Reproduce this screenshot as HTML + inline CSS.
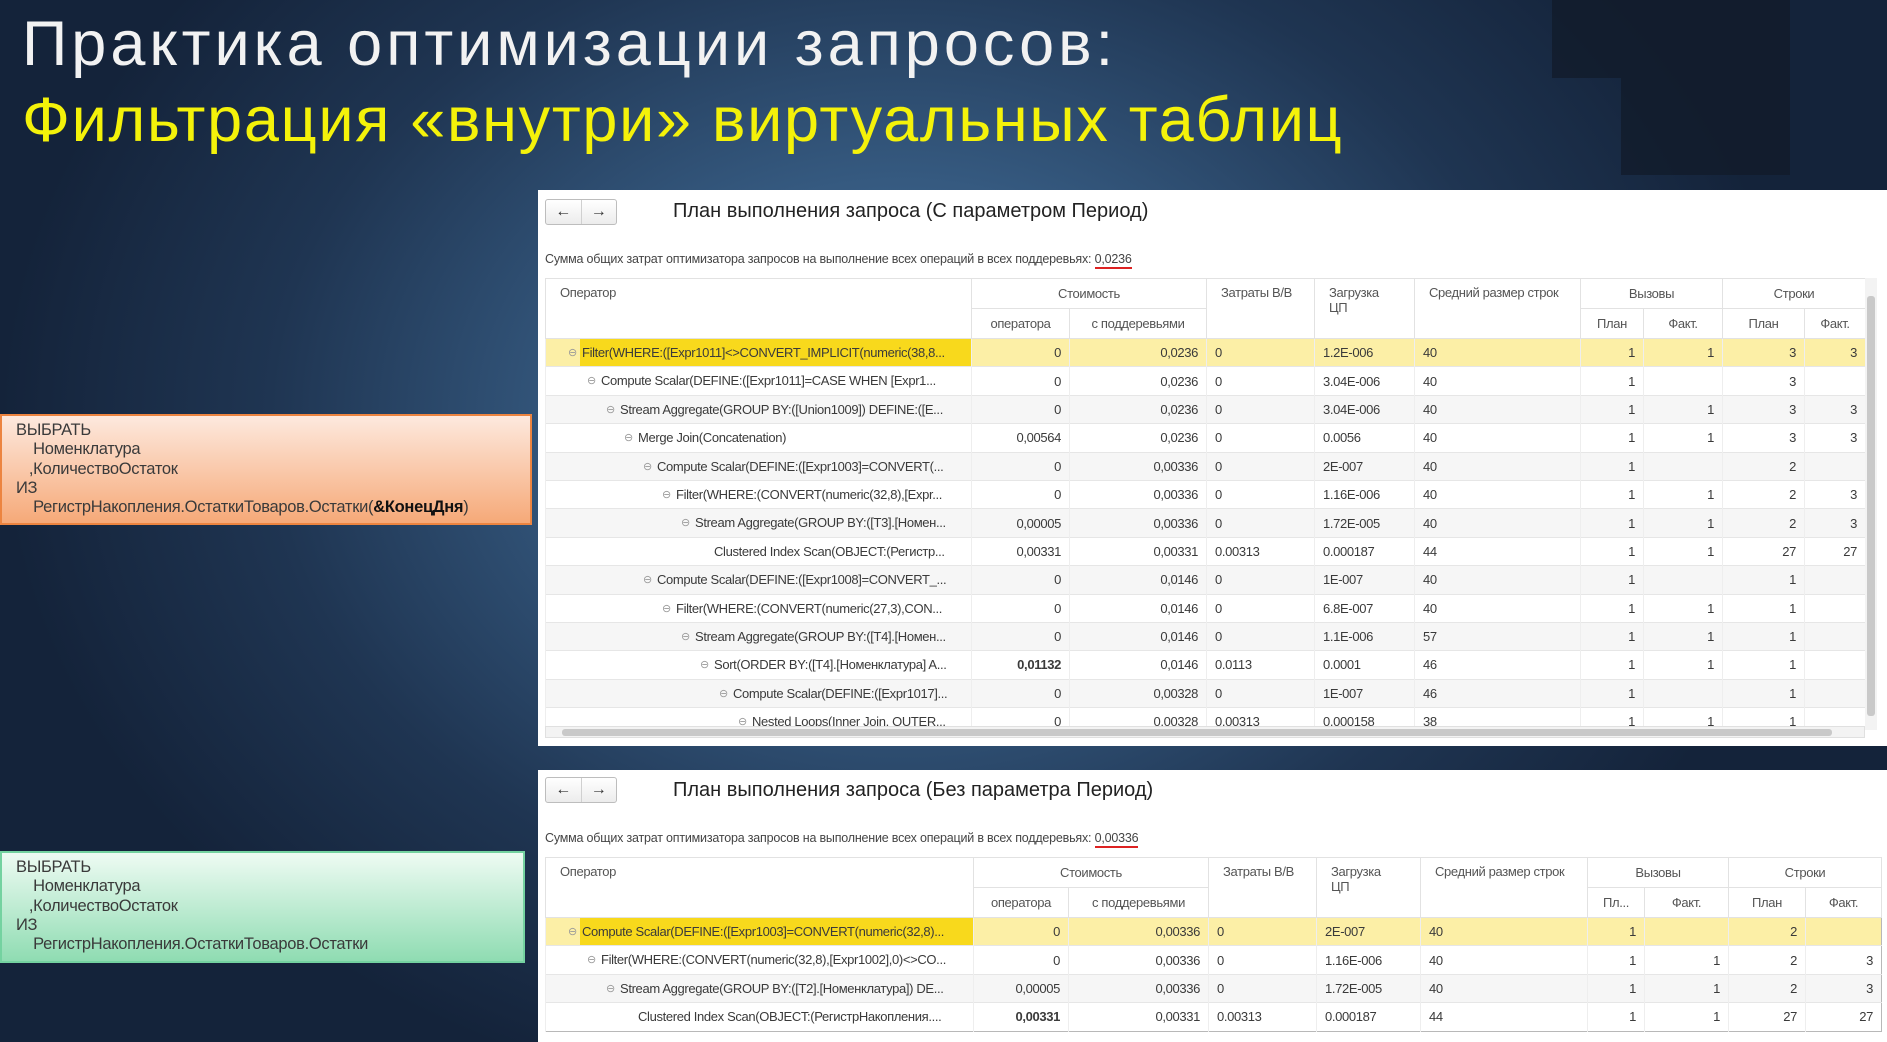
<!DOCTYPE html>
<html><head><meta charset="utf-8">
<style>
*{margin:0;padding:0;box-sizing:border-box}
body{width:1887px;height:1042px;overflow:hidden;position:relative;font-family:"Liberation Sans",sans-serif;
background:radial-gradient(ellipse 900px 700px at 900px 420px,#4f79a3 0%,#35597f 35%,#1f3552 70%,#14233a 100%);}
.dk{position:absolute;background:#111b29;opacity:.75}
.t{position:absolute;left:22px;font-size:63px;line-height:64px;white-space:nowrap}
.panel{position:absolute;left:538px;right:0;background:#fff}
.btns{position:absolute;left:7px;width:72px;height:26px;border:1px solid #bdbdbd;border-radius:3px;background:linear-gradient(#fff,#ececec);font-size:16px;color:#333;display:flex}
.btns span{flex:1;text-align:center;line-height:23px;font-weight:bold}
.btns span+span{border-left:1px solid #d0d0d0}
.ttl{position:absolute;left:135px;font-size:20px;color:#222;white-space:nowrap}
.sum{position:absolute;left:7px;font-size:12.5px;color:#444;white-space:nowrap;letter-spacing:-.2px}
.sum u{text-decoration:none;border-bottom:2px solid #d22;padding-bottom:1px}
table{position:absolute;left:7px;border-collapse:collapse;table-layout:fixed;font-size:13px;color:#3a3a3a;letter-spacing:-.35px;border:1px solid #b8b8b8}
td,th{white-space:nowrap;overflow:hidden;padding:0 8px;font-weight:normal}
th{height:30px;color:#555;border:1px solid #e2e2e2;text-align:center;vertical-align:middle}
th.l{text-align:left;vertical-align:top;padding-top:6px;padding-left:14px}
td{height:28.4px;border-left:1px solid #eee;text-align:right;border-top:1px solid #e6e6e6}
td.l{text-align:left}
tr.a td{background:#f6f6f6}
tr.h td{background:#fcefa6}
td.op{padding:0;position:relative;text-align:left}
td.op i{position:absolute;top:7px;font-style:normal;color:#999;font-size:11px}
td.op span{position:absolute;top:0;bottom:0;right:0;line-height:28px;padding-left:2px;overflow:hidden;text-overflow:ellipsis}
tr.h td.op span{background:#f8d91c}
b{font-weight:bold}
.box{position:absolute;left:0;font-size:16.5px;line-height:19.3px;color:#3a3a3a;padding:5px 14px;white-space:pre;letter-spacing:-.3px}
</style></head><body>
<div class="dk" style="left:1552px;top:0;width:238px;height:78px"></div>
<div class="dk" style="left:1621px;top:78px;width:169px;height:97px"></div>
<div class="t" style="top:12px;color:#f2f2f2;letter-spacing:4px">Практика оптимизации запросов:</div>
<div class="t" style="top:88px;color:#f4f20a;letter-spacing:1.7px">Фильтрация «внутри» виртуальных таблиц</div>

<div class="box" style="top:414px;width:532px;height:111px;background:linear-gradient(#fde9de,#f6a978);border:2px solid #ec8440">ВЫБРАТЬ
    Номенклатура
   ,КоличествоОстаток
ИЗ
    РегистрНакопления.ОстаткиТоваров.Остатки(<b style="color:#111">&amp;КонецДня</b>)</div>
<div class="box" style="top:851px;width:525px;height:112px;background:linear-gradient(#eefbf3,#8fdcb2);border:2px solid #74d2a0">ВЫБРАТЬ
    Номенклатура
   ,КоличествоОстаток
ИЗ
    РегистрНакопления.ОстаткиТоваров.Остатки</div>

<div class="panel" style="top:190px;height:556px">
<div class="btns" style="top:9px"><span>←</span><span>→</span></div>
<div class="ttl" style="top:10px">План выполнения запроса (С параметром Период)</div>
<div class="sum" style="top:62px">Сумма общих затрат оптимизатора запросов на выполнение всех операций в всех поддеревьях: <u>0,0236</u></div>
<div style="position:absolute;left:1327px;top:88px;width:12px;height:452px;background:#f3f3f3"><div style="margin:18px 2px 0;height:420px;background:#c9c9c9;border-radius:3px"></div></div>
<div style="position:absolute;left:7px;top:536px;width:1320px;height:12px;background:#f3f3f3;border:1px solid #e0e0e0"><div style="margin:2px 0 0 16px;width:1270px;height:7px;background:#c9c9c9;border-radius:3px"></div></div>
<div style="position:absolute;left:7px;top:88px;width:1320px;height:448px;overflow:hidden">
<table style="left:0;top:0;width:1320px">
<colgroup><col style="width:426px"><col style="width:98px"><col style="width:137px"><col style="width:108px"><col style="width:100px"><col style="width:166px"><col style="width:63px"><col style="width:79px"><col style="width:82px"><col style="width:61px"></colgroup>
<tr><th class="l" rowspan="2">Оператор</th><th colspan="2">Стоимость</th><th class="l" rowspan="2">Затраты В/В</th><th class="l" rowspan="2">Загрузка<br>ЦП</th><th class="l" rowspan="2">Средний размер строк</th><th colspan="2">Вызовы</th><th colspan="2">Строки</th></tr>
<tr><th>оператора</th><th>с поддеревьями</th><th>План</th><th>Факт.</th><th>План</th><th>Факт.</th></tr>
<tr class="h"><td class="op"><i style="left:22px">⊖</i><span style="left:34px">Filter(WHERE:([Expr1011]&lt;&gt;CONVERT_IMPLICIT(numeric(38,8...</span></td><td>0</td><td>0,0236</td><td class="l">0</td><td class="l">1.2E-006</td><td class="l">40</td><td>1</td><td>1</td><td>3</td><td>3</td></tr>
<tr><td class="op"><i style="left:41px">⊖</i><span style="left:53px">Compute Scalar(DEFINE:([Expr1011]=CASE WHEN [Expr1...</span></td><td>0</td><td>0,0236</td><td class="l">0</td><td class="l">3.04E-006</td><td class="l">40</td><td>1</td><td></td><td>3</td><td></td></tr>
<tr class="a"><td class="op"><i style="left:60px">⊖</i><span style="left:72px">Stream Aggregate(GROUP BY:([Union1009]) DEFINE:([E...</span></td><td>0</td><td>0,0236</td><td class="l">0</td><td class="l">3.04E-006</td><td class="l">40</td><td>1</td><td>1</td><td>3</td><td>3</td></tr>
<tr><td class="op"><i style="left:78px">⊖</i><span style="left:90px">Merge Join(Concatenation)</span></td><td>0,00564</td><td>0,0236</td><td class="l">0</td><td class="l">0.0056</td><td class="l">40</td><td>1</td><td>1</td><td>3</td><td>3</td></tr>
<tr class="a"><td class="op"><i style="left:97px">⊖</i><span style="left:109px">Compute Scalar(DEFINE:([Expr1003]=CONVERT(...</span></td><td>0</td><td>0,00336</td><td class="l">0</td><td class="l">2E-007</td><td class="l">40</td><td>1</td><td></td><td>2</td><td></td></tr>
<tr><td class="op"><i style="left:116px">⊖</i><span style="left:128px">Filter(WHERE:(CONVERT(numeric(32,8),[Expr...</span></td><td>0</td><td>0,00336</td><td class="l">0</td><td class="l">1.16E-006</td><td class="l">40</td><td>1</td><td>1</td><td>2</td><td>3</td></tr>
<tr class="a"><td class="op"><i style="left:135px">⊖</i><span style="left:147px">Stream Aggregate(GROUP BY:([T3].[Номен...</span></td><td>0,00005</td><td>0,00336</td><td class="l">0</td><td class="l">1.72E-005</td><td class="l">40</td><td>1</td><td>1</td><td>2</td><td>3</td></tr>
<tr><td class="op"><span style="left:166px">Clustered Index Scan(OBJECT:(Регистр...</span></td><td>0,00331</td><td>0,00331</td><td class="l">0.00313</td><td class="l">0.000187</td><td class="l">44</td><td>1</td><td>1</td><td>27</td><td>27</td></tr>
<tr class="a"><td class="op"><i style="left:97px">⊖</i><span style="left:109px">Compute Scalar(DEFINE:([Expr1008]=CONVERT_...</span></td><td>0</td><td>0,0146</td><td class="l">0</td><td class="l">1E-007</td><td class="l">40</td><td>1</td><td></td><td>1</td><td></td></tr>
<tr><td class="op"><i style="left:116px">⊖</i><span style="left:128px">Filter(WHERE:(CONVERT(numeric(27,3),CON...</span></td><td>0</td><td>0,0146</td><td class="l">0</td><td class="l">6.8E-007</td><td class="l">40</td><td>1</td><td>1</td><td>1</td><td></td></tr>
<tr class="a"><td class="op"><i style="left:135px">⊖</i><span style="left:147px">Stream Aggregate(GROUP BY:([T4].[Номен...</span></td><td>0</td><td>0,0146</td><td class="l">0</td><td class="l">1.1E-006</td><td class="l">57</td><td>1</td><td>1</td><td>1</td><td></td></tr>
<tr><td class="op"><i style="left:154px">⊖</i><span style="left:166px">Sort(ORDER BY:([T4].[Номенклатура] A...</span></td><td><b>0,01132</b></td><td>0,0146</td><td class="l">0.0113</td><td class="l">0.0001</td><td class="l">46</td><td>1</td><td>1</td><td>1</td><td></td></tr>
<tr class="a"><td class="op"><i style="left:173px">⊖</i><span style="left:185px">Compute Scalar(DEFINE:([Expr1017]...</span></td><td>0</td><td>0,00328</td><td class="l">0</td><td class="l">1E-007</td><td class="l">46</td><td>1</td><td></td><td>1</td><td></td></tr>
<tr><td class="op"><i style="left:192px">⊖</i><span style="left:204px">Nested Loops(Inner Join, OUTER...</span></td><td>0</td><td>0,00328</td><td class="l">0.00313</td><td class="l">0.000158</td><td class="l">38</td><td>1</td><td>1</td><td>1</td><td></td></tr>
</table></div>
</div>

<div class="panel" style="top:770px;height:272px">
<div class="btns" style="top:7px"><span>←</span><span>→</span></div>
<div class="ttl" style="top:9px">План выполнения запроса (Без параметра Период)</div>
<div class="sum" style="top:61px">Сумма общих затрат оптимизатора запросов на выполнение всех операций в всех поддеревьях: <u>0,00336</u></div>
<table style="top:87px;width:1336px">
<colgroup><col style="width:428px"><col style="width:95px"><col style="width:140px"><col style="width:108px"><col style="width:104px"><col style="width:167px"><col style="width:57px"><col style="width:84px"><col style="width:77px"><col style="width:76px"></colgroup>
<tr><th class="l" rowspan="2">Оператор</th><th colspan="2">Стоимость</th><th class="l" rowspan="2">Затраты В/В</th><th class="l" rowspan="2">Загрузка<br>ЦП</th><th class="l" rowspan="2">Средний размер строк</th><th colspan="2">Вызовы</th><th colspan="2">Строки</th></tr>
<tr><th>оператора</th><th>с поддеревьями</th><th>Пл...</th><th>Факт.</th><th>План</th><th>Факт.</th></tr>
<tr class="h"><td class="op"><i style="left:22px">⊖</i><span style="left:34px">Compute Scalar(DEFINE:([Expr1003]=CONVERT(numeric(32,8)...</span></td><td>0</td><td>0,00336</td><td class="l">0</td><td class="l">2E-007</td><td class="l">40</td><td>1</td><td></td><td>2</td><td></td></tr>
<tr><td class="op"><i style="left:41px">⊖</i><span style="left:53px">Filter(WHERE:(CONVERT(numeric(32,8),[Expr1002],0)&lt;&gt;CO...</span></td><td>0</td><td>0,00336</td><td class="l">0</td><td class="l">1.16E-006</td><td class="l">40</td><td>1</td><td>1</td><td>2</td><td>3</td></tr>
<tr class="a"><td class="op"><i style="left:60px">⊖</i><span style="left:72px">Stream Aggregate(GROUP BY:([T2].[Номенклатура]) DE...</span></td><td>0,00005</td><td>0,00336</td><td class="l">0</td><td class="l">1.72E-005</td><td class="l">40</td><td>1</td><td>1</td><td>2</td><td>3</td></tr>
<tr><td class="op"><span style="left:90px">Clustered Index Scan(OBJECT:(РегистрНакопления....</span></td><td><b>0,00331</b></td><td>0,00331</td><td class="l">0.00313</td><td class="l">0.000187</td><td class="l">44</td><td>1</td><td>1</td><td>27</td><td>27</td></tr>
</table>
</div>
</body></html>
